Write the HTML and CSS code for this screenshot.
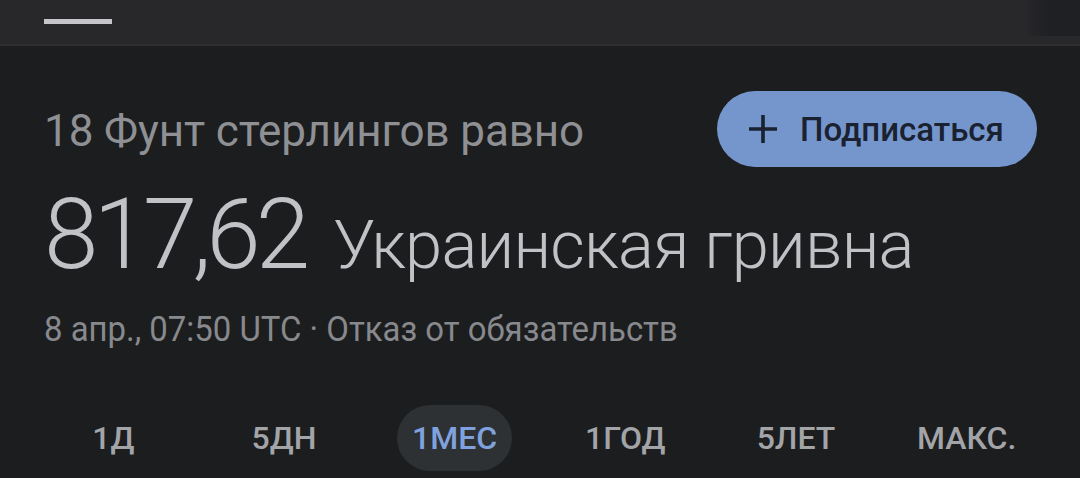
FILE: index.html
```html
<!DOCTYPE html>
<html lang="ru">
<head>
<meta charset="utf-8">
<title>Конвертер валют</title>
<link rel="stylesheet" href="styles.css">
</head>
<body>
<header class="topbar">
  <div class="tab tab-active"><span class="tab-indicator"></span></div>
  <div class="topbar-fade"></div>
</header>
<main class="content">
  <div class="head-row">
    <div class="from">18 Фунт стерлингов равно</div>
    <button class="subscribe">
      <svg class="plus" viewBox="0 0 30 30" width="30" height="30" aria-hidden="true"><path d="M15 1v28M1 15h28" stroke="#1a2130" stroke-width="3.6" fill="none"/></svg>
      <span>Подписаться</span>
    </button>
  </div>
  <div class="result"><span class="amount">817,62</span><span class="currency">Украинская гривна</span></div>
  <div class="meta"><span class="meta-text">8 апр., 07:50 UTC · Отказ от обязательств</span></div>
  <nav class="ranges">
    <div class="range"><span class="range-label">1Д</span></div>
    <div class="range"><span class="range-label">5ДН</span></div>
    <div class="range"><span class="range-label range-active">1МЕС</span></div>
    <div class="range"><span class="range-label">1ГОД</span></div>
    <div class="range"><span class="range-label">5ЛЕТ</span></div>
    <div class="range"><span class="range-label">МАКС.</span></div>
  </nav>
</main>
</body>
</html>
```

FILE: styles.css
```css
html, body {
  margin: 0;
  padding: 0;
}
body {
  width: 1080px;
  height: 478px;
  overflow: hidden;
  background: #1c1d1f;
  font-family: Roboto, "Noto Sans", sans-serif;
}
.topbar {
  position: relative;
  height: 44px;
  background: #28282b;
  border-bottom: 2px solid #2e2e31;
  display: flex;
  padding-left: 44px;
}
.tab {
  width: 68px;
  display: flex;
  flex-direction: column;
  padding-top: 19px;
}
.tab-indicator {
  display: block;
  height: 5px;
  background: #c6c6ca;
}
.topbar-fade {
  position: absolute;
  right: 0;
  top: 0;
  width: 52px;
  height: 36px;
  background: linear-gradient(to right, rgba(30,31,34,0.3), #1f2023 40%);
}
.content {
  padding: 0 43px 0 44px;
}
.head-row {
  margin-top: 45px;
  height: 76px;
  display: flex;
  align-items: center;
  justify-content: space-between;
}
.from {
  font-size: 44px;
  line-height: 1;
  color: #8e9094;
  margin-top: 4px;
  letter-spacing: -0.1px;
}
.subscribe {
  height: 76px;
  width: 320px;
  border: none;
  border-radius: 38px;
  background: #7596cc;
  color: #1a2130;
  font-family: Roboto, "Noto Sans", sans-serif;
  font-size: 33px;
  font-weight: 500;
  display: flex;
  align-items: center;
  padding: 0 0 0 31px;
  gap: 22px;
}
.plus {
  display: block;
  flex: none;
}
.result {
  margin-top: 19px;
  font-size: 98px;
  line-height: 1;
  color: #c0c2c6;
  white-space: nowrap;
  font-weight: 300;
}
.amount {
  font-size: 98px;
  line-height: 1;
  letter-spacing: -0.05em;
  margin-right: 28px;
}
.currency {
  font-size: 67px;
  line-height: 1;
  letter-spacing: -0.8px;
}
.meta {
  margin-top: 28px;
  font-size: 35px;
  line-height: 1;
  color: #88898d;
  white-space: nowrap;
}
.meta-text {
  display: inline-block;
  transform: scaleX(0.94);
  transform-origin: left center;
}
.ranges {
  margin: 58px 0 0 -16px;
  width: 1024px;
  display: grid;
  grid-template-columns: repeat(6, 1fr);
}
.range {
  display: flex;
  justify-content: center;
}
.range-label {
  display: block;
  height: 66px;
  line-height: 66px;
  padding: 0 15px;
  border-radius: 33px;
  font-size: 32px;
  font-weight: 500;
  color: #a2a4a8;
}
.range-active {
  background: #2e3134;
  color: #7fa2de;
}
```
